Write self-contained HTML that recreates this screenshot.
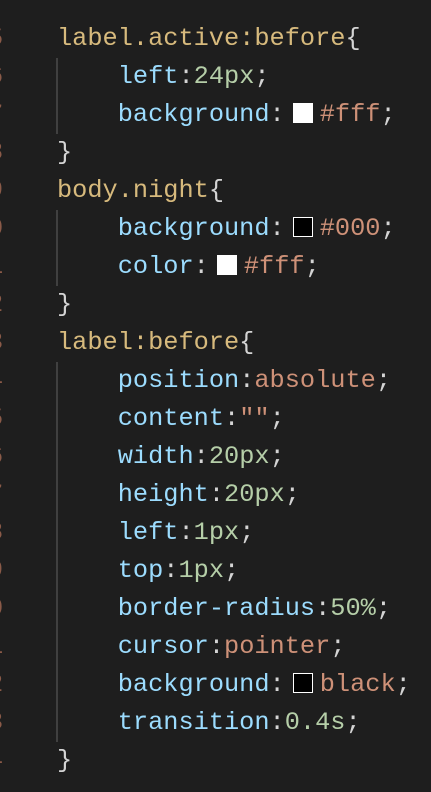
<!DOCTYPE html>
<html><head><meta charset="utf-8"><style>
body{margin:0;background:#1e1e1e;width:431px;height:792px;overflow:hidden;position:relative;}
.c{position:absolute;left:57px;top:20px;font-family:"Liberation Mono",monospace;font-size:25.3px;line-height:38px;color:#d4d4d4;white-space:pre;}
.n{position:absolute;left:-12px;top:20px;font-family:"Liberation Mono",monospace;font-size:25.3px;line-height:38px;color:#8a5a48;white-space:pre;}
.s{color:#d7ba7d}.p{color:#9cdcfe}.v{color:#ce9178}.m{color:#b5cea8}
.sw{display:inline-block;width:18px;height:18px;border:1.5px solid #fff;vertical-align:-2px;margin:0 7px 0 8px;}
.g{position:absolute;left:56px;width:2px;background:#404040;}
</style></head><body>
<div class="n">5
6
7
8
9
0
1
2
3
4
5
6
7
8
9
0
1
2
3
4</div>
<div class="g" style="top:58px;height:76px"></div>
<div class="g" style="top:210px;height:76px"></div>
<div class="g" style="top:362px;height:380px"></div>
<div class="c"><span class="s">label.active:before</span>{
    <span class="p">left</span>:<span class="m">24px</span>;
    <span class="p">background</span>:<span class="sw" style="background:#fff"></span><span class="v">#fff</span>;
}
<span class="s">body.night</span>{
    <span class="p">background</span>:<span class="sw" style="background:#000"></span><span class="v">#000</span>;
    <span class="p">color</span>:<span class="sw" style="background:#fff"></span><span class="v">#fff</span>;
}
<span class="s">label:before</span>{
    <span class="p">position</span>:<span class="v">absolute</span>;
    <span class="p">content</span>:<span class="v">""</span>;
    <span class="p">width</span>:<span class="m">20px</span>;
    <span class="p">height</span>:<span class="m">20px</span>;
    <span class="p">left</span>:<span class="m">1px</span>;
    <span class="p">top</span>:<span class="m">1px</span>;
    <span class="p">border-radius</span>:<span class="m">50%</span>;
    <span class="p">cursor</span>:<span class="v">pointer</span>;
    <span class="p">background</span>:<span class="sw" style="background:#000"></span><span class="v">black</span>;
    <span class="p">transition</span>:<span class="m">0.4s</span>;
}</div>
</body></html>
